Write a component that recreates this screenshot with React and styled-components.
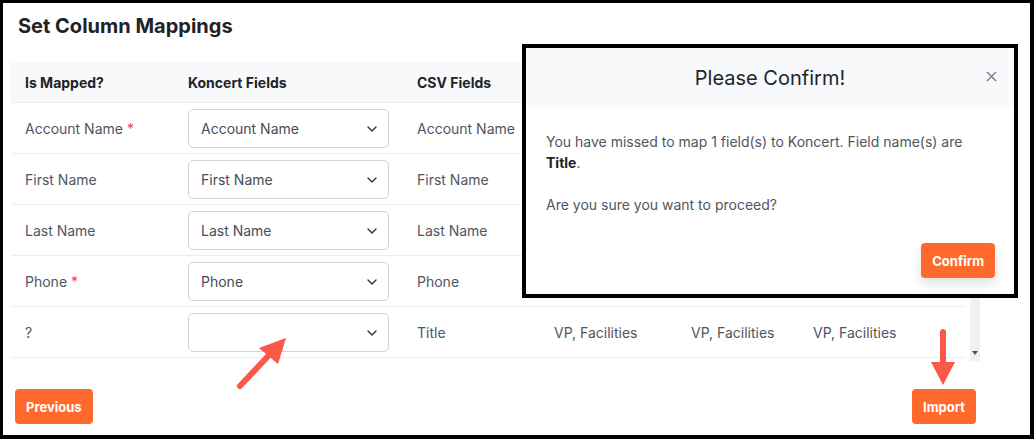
import React from "react";
import styled, { createGlobalStyle } from "styled-components";
import { ChevronDown, X } from "lucide-react";

const Global = createGlobalStyle`
  html, body { margin: 0; padding: 0; background: #fff; }
  * { box-sizing: border-box; }
  body { font-family: Inter, "Noto Sans", "Liberation Sans", sans-serif; }
`;

const Page = styled.div`
  position: relative;
  width: 1034px;
  height: 439px;
  border: 3px solid #000;
  border-right-width: 4px;
  border-bottom-width: 4px;
  padding: 11px 8px 0 8px;
  display: flex;
  flex-direction: column;
  background: #fff;
`;

const Title = styled.h1`
  margin: 0 0 24px 7px;
  font-size: 20px;
  line-height: 24px;
  font-weight: 700;
  color: #1f2328;
`;

const TableArea = styled.div`
  display: flex;
  align-items: flex-start;
  gap: 5px;
`;

const Table = styled.div`
  width: 954px;
  display: grid;
  grid-template-columns: 163px 229px 137px 137px 122px 166px;
`;

const HeadCell = styled.div`
  height: 41px;
  display: flex;
  align-items: center;
  padding-left: 14px;
  background: #f8f9fb;
  border-bottom: 1px solid #eceef2;
  font-size: 14px;
  font-weight: 700;
  color: #1f2328;
`;

const Cell = styled.div`
  height: 51px;
  display: flex;
  align-items: center;
  padding: 1px 14px 0 14px;
  border-bottom: 1px solid #eceef2;
  font-size: 14px;
  color: #50565e;
  white-space: nowrap;
`;

const Req = styled.span`
  color: #e5484d;
  margin-left: 4px;
`;

const Select = styled.div`
  width: 201px;
  height: 39px;
  border: 1px solid #cdd3dc;
  border-radius: 5px;
  display: flex;
  align-items: center;
  justify-content: space-between;
  padding: 0 8px 0 12px;
  font-size: 14px;
  color: #474d55;
  background: #fff;
`;

const Scrollbar = styled.div`
  width: 10px;
  height: 299px;
  background: #f1f1f1;
  display: flex;
  flex-direction: column;
  justify-content: flex-end;
  align-items: center;
  padding-bottom: 6px;
`;

const ScrollArrow = styled.div`
  width: 0;
  height: 0;
  border-left: 3px solid transparent;
  border-right: 3px solid transparent;
  border-top: 4px solid #505050;
`;

const Footer = styled.div`
  margin-top: 28px;
  padding: 0 46px 0 4px;
  display: flex;
  justify-content: space-between;
`;

const OrangeButton = styled.button`
  height: 35px;
  padding: 0 ${(p) => p.$px || 11}px;
  border: none;
  border-radius: 4px;
  background: #ff6a2c;
  color: #fff;
  font-family: Inter, "Noto Sans", "Liberation Sans", sans-serif;
  font-size: 13px;
  font-weight: 700;
  box-shadow: ${(p) => (p.$shadow ? "0 6px 12px rgba(0,0,0,0.12)" : "none")};
`;

const Modal = styled.div`
  position: absolute;
  left: 519px;
  top: 41px;
  width: 496px;
  height: 254px;
  border: 4px solid #000;
  background: #fff;
  display: flex;
  flex-direction: column;
`;

const ModalHeader = styled.div`
  position: relative;
  height: 59px;
  background: #f8f9fb;
  display: flex;
  align-items: center;
  justify-content: center;
`;

const ModalTitle = styled.h2`
  margin: 0;
  font-size: 20px;
  font-weight: 400;
  color: #212529;
`;

const CloseBtn = styled.span`
  position: absolute;
  right: 14px;
  top: 20px;
  display: flex;
  color: #6b7280;
`;

const ModalBody = styled.div`
  padding: 24px 20px 0 20px;
  font-size: 14px;
  line-height: 21px;
  color: #50565e;
`;

const Para = styled.p`
  margin: 0 0 ${(p) => p.$mb || 0}px 0;
  max-width: 445px;
  b { color: #1f2328; font-weight: 700; }
`;

const ModalFooter = styled.div`
  margin-top: auto;
  padding: 0 19px 16px 0;
  display: flex;
  justify-content: flex-end;
`;

const Overlay = styled.svg`
  position: absolute;
  left: -3px;
  top: -3px;
  pointer-events: none;
`;

const rows = [
  { field: "Account Name", req: true, value: "Account Name", csv: "Account Name", s: "" },
  { field: "First Name", value: "First Name", csv: "First Name", s: "" },
  { field: "Last Name", value: "Last Name", csv: "Last Name", s: "" },
  { field: "Phone", req: true, value: "Phone", csv: "Phone", s: "" },
  { field: "?", value: "", csv: "Title", s: "VP, Facilities" },
];

export default function App() {
  return (
    <>
      <Global />
      <Page>
        <Title>Set Column Mappings</Title>
        <TableArea>
          <Table>
            <HeadCell>Is Mapped?</HeadCell>
            <HeadCell>Koncert Fields</HeadCell>
            <HeadCell>CSV Fields</HeadCell>
            <HeadCell />
            <HeadCell />
            <HeadCell />
            {rows.map((r, i) => (
              <React.Fragment key={i}>
                <Cell>
                  {r.field}
                  {r.req && <Req>*</Req>}
                </Cell>
                <Cell>
                  <Select>
                    <span>{r.value}</span>
                    <ChevronDown size={16} strokeWidth={2} color="#2b2f36" />
                  </Select>
                </Cell>
                <Cell>{r.csv}</Cell>
                <Cell>{r.s}</Cell>
                <Cell>{r.s}</Cell>
                <Cell>{r.s}</Cell>
              </React.Fragment>
            ))}
          </Table>
          <Scrollbar>
            <ScrollArrow />
          </Scrollbar>
        </TableArea>
        <Footer>
          <OrangeButton $px={11}>Previous</OrangeButton>
          <OrangeButton $px={11}>Import</OrangeButton>
        </Footer>

        <Modal>
          <ModalHeader>
            <ModalTitle>Please Confirm!</ModalTitle>
            <CloseBtn>
              <X size={17} strokeWidth={1.6} />
            </CloseBtn>
          </ModalHeader>
          <ModalBody>
            <Para $mb={21}>
              You have missed to map 1 field(s) to Koncert. Field name(s) are <b>Title</b>.
            </Para>
            <Para>Are you sure you want to proceed?</Para>
          </ModalBody>
          <ModalFooter>
            <OrangeButton $px={11} $shadow>Confirm</OrangeButton>
          </ModalFooter>
        </Modal>

        <Overlay width="1034" height="439" viewBox="0 0 1034 439">
          <line x1="240" y1="386" x2="271" y2="353" stroke="#fa5848" strokeWidth="6" strokeLinecap="round" />
          <polygon points="286,338 259,348 278,364" fill="#fa5848" />
          <line x1="943" y1="332" x2="943" y2="364" stroke="#fa5848" strokeWidth="6" strokeLinecap="round" />
          <polygon points="931,362 955,362 943,385" fill="#fa5848" />
        </Overlay>
      </Page>
    </>
  );
}
